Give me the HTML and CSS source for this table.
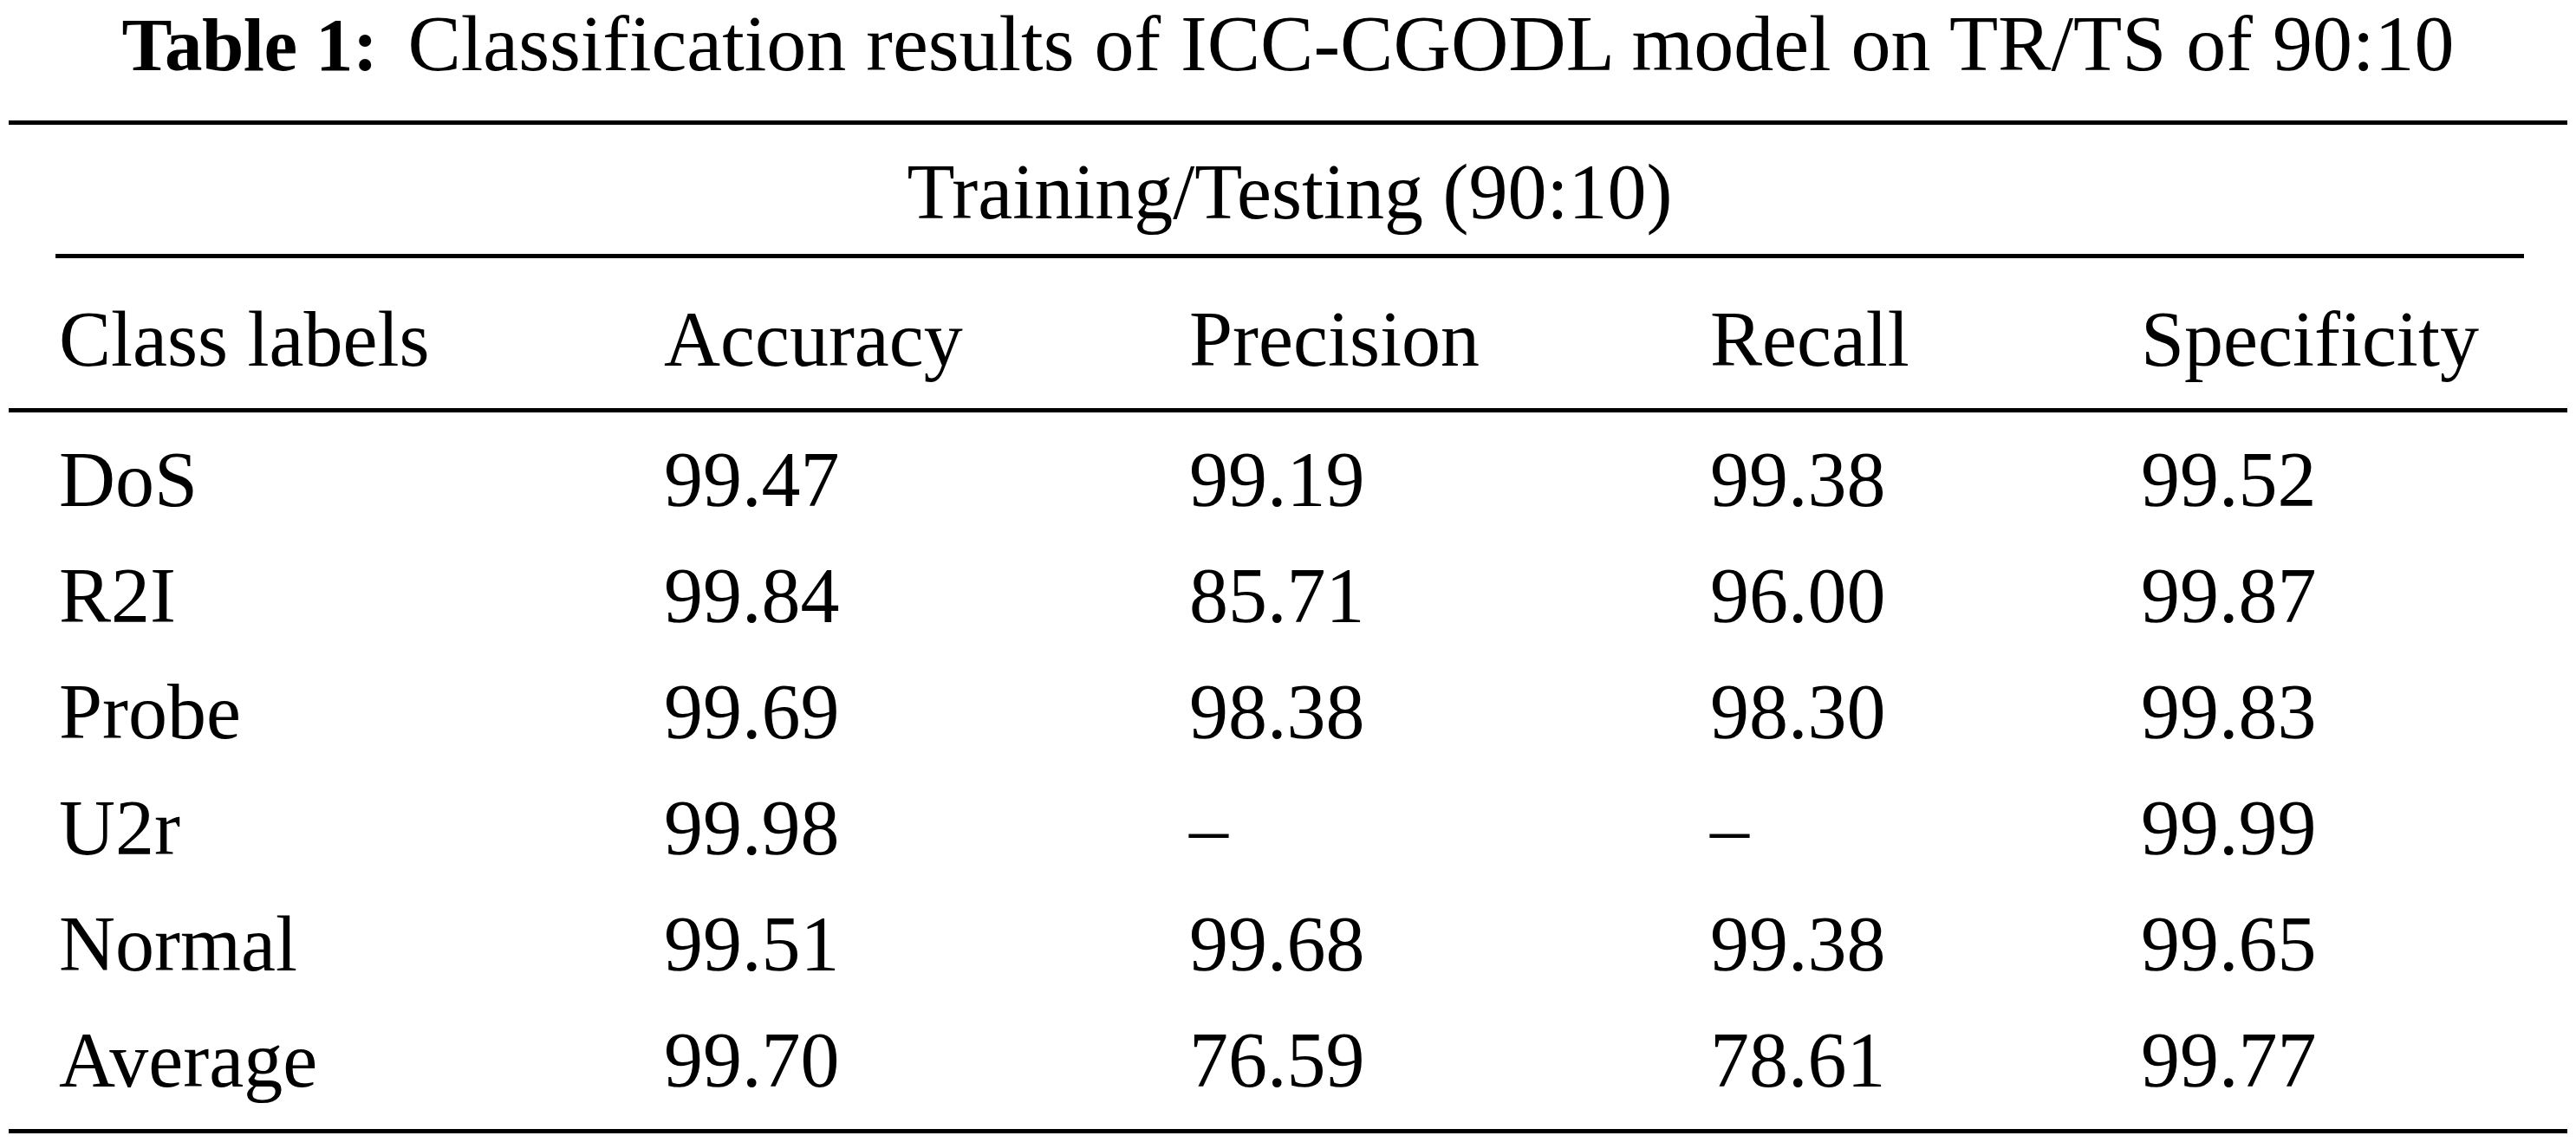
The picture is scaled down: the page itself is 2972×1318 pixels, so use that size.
FILE: index.html
```html
<!DOCTYPE html>
<html lang="en">
<head>
<meta charset="utf-8">
<title>Table 1</title>
<link rel="stylesheet" href="styles.css">
</head>
<body>
<div class="figure">
  <div class="caption"><span class="caption-label">Table 1:</span> Classification results of ICC-CGODL model on TR/TS of 90:10</div>
  <table class="results">
    <colgroup>
      <col class="c1"><col class="c2"><col class="c3"><col class="c4"><col class="c5">
    </colgroup>
    <thead>
      <tr class="spanner-row">
        <th colspan="5"><div class="spanner">Training/Testing (90:10)</div></th>
      </tr>
      <tr class="head-row">
        <th>Class labels</th><th>Accuracy</th><th>Precision</th><th>Recall</th><th>Specificity</th>
      </tr>
    </thead>
    <tbody>
      <tr class="first"><td>DoS</td><td>99.47</td><td>99.19</td><td>99.38</td><td>99.52</td></tr>
      <tr><td>R2I</td><td>99.84</td><td>85.71</td><td>96.00</td><td>99.87</td></tr>
      <tr><td>Probe</td><td>99.69</td><td>98.38</td><td>98.30</td><td>99.83</td></tr>
      <tr><td>U2r</td><td>99.98</td><td>–</td><td>–</td><td>99.99</td></tr>
      <tr><td>Normal</td><td>99.51</td><td>99.68</td><td>99.38</td><td>99.65</td></tr>
      <tr class="last"><td>Average</td><td>99.70</td><td>76.59</td><td>78.61</td><td>99.77</td></tr>
    </tbody>
  </table>
</div>
</body>
</html>
```

FILE: styles.css
```css
html, body {
  margin: 0;
  padding: 0;
  background: #ffffff;
}

body {
  font-family: "Liberation Serif", "Times New Roman", serif;
  color: #000000;
  font-size: 90px;
}

.figure {
  width: 2952px;
  margin: 0 10px;
}

.caption {
  font-size: 92px;
  text-align: center;
  line-height: 100px;
  height: 100px;
  margin-bottom: 39px;
  white-space: nowrap;
}

.caption-label {
  font-weight: bold;
  font-size: 87px;
  letter-spacing: -0.5px;
  margin-right: 12px;
}

.results {
  width: 2952px;
  table-layout: fixed;
  border-collapse: collapse;
  border-spacing: 0;
  border-top: 5px solid #000;
  border-bottom: 5px solid #000;
}

.c1 { width: 698px; }
.c2 { width: 606px; }
.c3 { width: 601px; }
.c4 { width: 497px; }
.c5 { width: 550px; }

.results th,
.results td {
  font-weight: normal;
  text-align: left;
  padding: 0 0 0 58px;
  white-space: nowrap;
  vertical-align: top;
}

.spanner-row th {
  padding: 33px 50px 0 54px;
  line-height: 90px;
}

.spanner {
  text-align: center;
  padding-bottom: 26px;
  border-bottom: 5px solid #000;
}

.head-row th {
  line-height: 90px;
  padding-top: 49px;
  padding-bottom: 34px;
  border-bottom: 5px solid #000;
}

.results tbody td {
  line-height: 134px;
  height: 134px;
}

.results tbody tr.first td {
  padding-top: 11px;
}

.results tbody tr.last td {
  padding-bottom: 12px;
}
```
